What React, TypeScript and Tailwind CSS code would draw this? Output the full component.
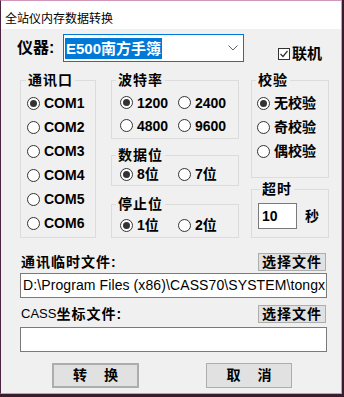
import React from "react";

const F = "font-['Liberation_Sans','Noto_Sans_CJK_SC',sans-serif]";

function Radio({ checked, label, w }: { checked?: boolean; label: string; w?: string }) {
  return (
    <div className={`flex items-center ${w ?? ""}`}>
      <span className="w-[13px] h-[13px] rounded-full border border-[#333333] bg-white flex items-center justify-center shrink-0">
        {checked && <span className="w-[7px] h-[7px] rounded-full bg-[#333333]" />}
      </span>
      <span className={`ml-[4px] text-[14px] font-bold leading-[16px] text-black whitespace-nowrap ${F}`}>{label}</span>
    </div>
  );
}

function Group({
  title,
  h,
  legendMl,
  children,
  className,
}: {
  title: string;
  h: string;
  legendMl: string;
  children: React.ReactNode;
  className?: string;
}) {
  return (
    <fieldset className={`border border-[#dcdcdc] ${h} ${className ?? ""}`}>
      <legend className={`px-[2px] ${legendMl} text-[14px] leading-[18px] font-bold tracking-[1px] text-black ${F}`}>
        {title}
      </legend>
      {children}
    </fieldset>
  );
}

function Btn({ children, className }: { children: React.ReactNode; className?: string }) {
  return (
    <div
      className={`flex items-center justify-center bg-[#e1e1e1] border border-[#adadad] text-[14px] font-bold text-black ${F} ${className ?? ""}`}
    >
      {children}
    </div>
  );
}

export default function App() {
  return (
    <div className="w-[344px] h-[397px] bg-[#3a1c2e] flex items-start">
      <div className="w-[342px] h-[394px] border-t border-r border-b border-[#d197bb] border-l border-l-[#4a2440] flex flex-col bg-[#f0f0f0]">
        {/* title bar */}
        <div className="h-[28px] bg-white pl-[4px] pt-[4px] shrink-0">
          <span className="text-[12px] leading-[16px] text-black font-['Noto_Sans_CJK_SC',sans-serif]">
            全站仪内存数据转换
          </span>
        </div>

        {/* body */}
        <div className="flex flex-col">
          {/* row 1 */}
          <div className="mt-[5px] h-[28px] flex items-start pl-[16px]">
            <div className={`w-[46px] mt-[4px] text-[16px] leading-[20px] font-bold text-black ${F}`}>仪器:</div>
            <div className="w-[181px] h-[28px] border border-[#0078d7] bg-white flex items-center pl-[1px] pr-[5px]">
              <div className={`h-[21px] mt-[1px] bg-[#0078d7] text-white text-[15px] font-bold leading-[21px] px-[1px] ${F}`}>
                E500南方手簿
              </div>
              <div className="flex-1" />
              <svg width="10" height="6" viewBox="0 0 10 6">
                <path d="M0.5 0.5 L5 5 L9.5 0.5" fill="none" stroke="#606060" strokeWidth="1" />
              </svg>
            </div>
            <div className="ml-[34px] mt-[11px] flex items-center">
              <span className="w-[12px] h-[12px] border border-[#333333] bg-white flex items-center justify-center">
                <svg width="10" height="10" viewBox="0 0 10 10">
                  <path d="M1.5 5 L4 7.5 L8.5 2" fill="none" stroke="#333333" strokeWidth="1.2" />
                </svg>
              </span>
              <span className={`ml-[2px] text-[15px] leading-[18px] font-bold text-black ${F}`}>联机</span>
            </div>
          </div>

          {/* groups */}
          <div className="mt-[9px] h-[167px] flex pl-[19px]">
            {/* col1 */}
            <Group title="通讯口" h="h-[167px] w-[76px]" legendMl="ml-[5px]">
              <div className="mt-[2px] pl-[6px] flex flex-col">
                {["COM1", "COM2", "COM3", "COM4", "COM5", "COM6"].map((c, i) => (
                  <div key={c} className="h-[24px] flex items-center">
                    <Radio checked={i === 0} label={c} />
                  </div>
                ))}
              </div>
            </Group>

            {/* col2 */}
            <div className="ml-[15px] w-[128px] flex flex-col">
              <Group title="波特率" h="h-[68px] w-[128px]" legendMl="ml-[4px]">
                <div className="mt-[2px] pl-[8px] flex flex-col">
                  <div className="h-[23px] flex items-center">
                    <Radio checked label="1200" w="w-[58px]" />
                    <Radio label="2400" />
                  </div>
                  <div className="h-[23px] flex items-center">
                    <Radio label="4800" w="w-[58px]" />
                    <Radio label="9600" />
                  </div>
                </div>
              </Group>
              <Group title="数据位" h="h-[40px] w-[128px]" legendMl="ml-[4px]" className="mt-[7px]">
                <div className="pl-[8px] h-[20px] flex items-center">
                  <Radio checked label="8位" w="w-[58px]" />
                  <Radio label="7位" />
                </div>
              </Group>
              <Group title="停止位" h="h-[43px] w-[128px]" legendMl="ml-[4px]" className="mt-[9px]">
                <div className="mt-[2px] pl-[8px] h-[20px] flex items-center">
                  <Radio checked label="1位" w="w-[58px]" />
                  <Radio label="2位" />
                </div>
              </Group>
            </div>

            {/* col3 */}
            <div className="ml-[12px] w-[78px] flex flex-col">
              <Group title="校验" h="h-[107px] w-[78px]" legendMl="ml-[4px]">
                <div className="mt-[2px] pl-[5px] flex flex-col">
                  {["无校验", "奇校验", "偶校验"].map((c, i) => (
                    <div key={c} className="h-[24px] flex items-center">
                      <Radio checked={i === 0} label={c} />
                    </div>
                  ))}
                </div>
              </Group>
              <Group title="超时" h="h-[58px] w-[78px]" legendMl="ml-[8px]" className="mt-[2px]">
                <div className="mt-[5px] pl-[6px] flex items-center">
                  <div className={`w-[39px] h-[26px] border border-[#7a7a7a] bg-white pl-[3px] flex items-center text-[14px] font-bold text-black ${F}`}>
                    10
                  </div>
                  <span className={`ml-[8px] text-[14px] font-bold text-black ${F}`}>秒</span>
                </div>
              </Group>
            </div>
          </div>

          {/* file 1 */}
          <div className="mt-[15px] h-[18px] flex items-center pl-[20px] pr-[15px]">
            <span className={`text-[14px] font-bold tracking-[1px] text-black ${F}`}>通讯临时文件:</span>
            <div className="flex-1" />
            <Btn className="w-[68px] h-[18px] tracking-[1px]">选择文件</Btn>
          </div>
          <div className="mt-[2px] ml-[19px] w-[307px] h-[25px] border border-[#7a7a7a] bg-white pl-[2px] flex items-center overflow-hidden">
            <span className={`text-[14px] tracking-[0.1px] text-black whitespace-nowrap ${F}`}>
              D:\Program Files (x86)\CASS70\SYSTEM\tongx
            </span>
          </div>

          {/* file 2 */}
          <div className="mt-[7px] h-[18px] flex items-center pl-[20px] pr-[15px]">
            <span className={`text-[13px] text-black ${F}`}>CASS</span>
            <span className={`text-[14px] font-bold tracking-[1px] text-black ${F}`}>坐标文件:</span>
            <div className="flex-1" />
            <Btn className="w-[68px] h-[18px] tracking-[1px]">选择文件</Btn>
          </div>
          <div className="mt-[4px] ml-[19px] w-[307px] h-[25px] border border-[#7a7a7a] bg-white" />

          {/* buttons */}
          <div className="mt-[11px] flex pl-[51px]">
            <Btn className="w-[87px] h-[25px] border-2 border-[#0078d7] gap-[17px]">
              <span>转</span>
              <span>换</span>
            </Btn>
            <Btn className="ml-[67px] w-[86px] h-[25px] gap-[17px]">
              <span>取</span>
              <span>消</span>
            </Btn>
          </div>
        </div>
      </div>
    </div>
  );
}
